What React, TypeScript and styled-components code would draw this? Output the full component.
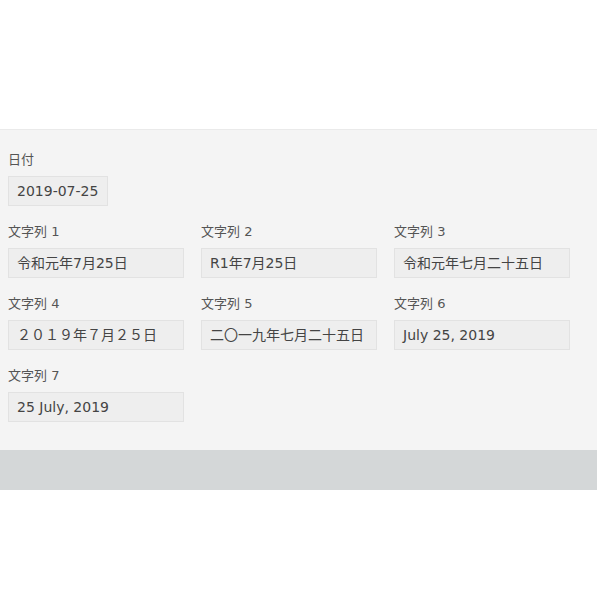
import React from 'react';
import styled, { createGlobalStyle } from 'styled-components';

const GlobalStyle = createGlobalStyle`
  html, body {
    margin: 0;
    padding: 0;
    background: #ffffff;
  }
  body {
    font-family: 'DejaVu Sans', 'Noto Sans CJK JP', sans-serif;
  }
`;

interface Field {
  label: string;
  value: string;
}

const DATE_FIELD: Field = { label: '日付', value: '2019-07-25' };

const STRING_FIELDS: Field[] = [
  { label: '文字列 1', value: '令和元年7月25日' },
  { label: '文字列 2', value: 'R1年7月25日' },
  { label: '文字列 3', value: '令和元年七月二十五日' },
  { label: '文字列 4', value: '２０１９年７月２５日' },
  { label: '文字列 5', value: '二〇一九年七月二十五日' },
  { label: '文字列 6', value: 'July 25, 2019' },
  { label: '文字列 7', value: '25 July, 2019' },
];

const Page = styled.div`
  width: 597px;
  height: 597px;
  display: flex;
  flex-direction: column;
`;

const Spacer = styled.div`
  height: 129px;
`;

const Panel = styled.div`
  background: #f4f4f4;
  border-top: 1px solid #eaeaea;
  padding: 21px 8px 11px;
`;

const Grid = styled.div`
  display: grid;
  grid-template-columns: repeat(3, 176px);
  column-gap: 17px;
`;

const FieldBox = styled.div`
  display: flex;
  flex-direction: column;
  margin-bottom: 17px;
`;

const Label = styled.div`
  font-size: 13px;
  line-height: 18px;
  height: 18px;
  color: #555555;
  margin-bottom: 7px;
  white-space: nowrap;
`;

const Value = styled.div<{ $width?: number }>`
  box-sizing: border-box;
  width: ${p => (p.$width ? `${p.$width}px` : '100%')};
  height: 30px;
  padding: 0 8px;
  background: #eeeeee;
  border: 1px solid #e2e2e2;
  font-size: 14px;
  line-height: 28px;
  color: #444444;
  white-space: nowrap;
  overflow: hidden;
`;

const Footer = styled.div`
  height: 40px;
  background: #d4d7d8;
`;

function FieldItem({ field, width }: { field: Field; width?: number }) {
  return (
    <FieldBox>
      <Label>{field.label}</Label>
      <Value $width={width}>{field.value}</Value>
    </FieldBox>
  );
}

export default function App() {
  return (
    <Page>
      <GlobalStyle />
      <Spacer />
      <Panel>
        <FieldItem field={DATE_FIELD} width={100} />
        <Grid>
          {STRING_FIELDS.map(f => (
            <FieldItem key={f.label} field={f} />
          ))}
        </Grid>
      </Panel>
      <Footer />
    </Page>
  );
}
